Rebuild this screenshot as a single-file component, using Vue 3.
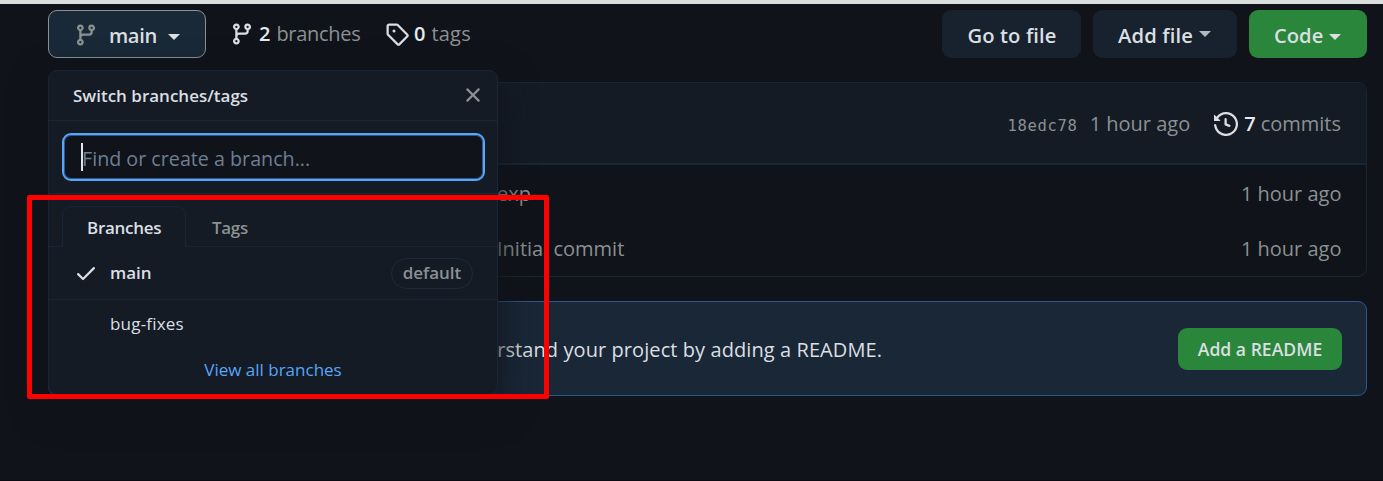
<script setup>
const icons = {
  branch: 'M11.75 2.5a.75.75 0 100 1.5.75.75 0 000-1.5zm-2.25.75a2.25 2.25 0 113 2.122V6A2.5 2.5 0 0110 8.5H6a1 1 0 00-1 1v1.128a2.251 2.251 0 11-1.5 0V5.372a2.25 2.25 0 111.5 0v1.836A2.492 2.492 0 016 7h4a1 1 0 001-1v-.628A2.25 2.25 0 019.5 3.25zM4.25 12a.75.75 0 100 1.5.75.75 0 000-1.5zM3.5 3.25a.75.75 0 111.5 0 .75.75 0 01-1.5 0z',
  tag: 'M2.5 7.775V2.75a.25.25 0 01.25-.25h5.025a.25.25 0 01.177.073l6.25 6.25a.25.25 0 010 .354l-5.025 5.025a.25.25 0 01-.354 0l-6.25-6.25a.25.25 0 01-.073-.177zm-1.5 0V2.75C1 1.784 1.784 1 2.75 1h5.025c.464 0 .91.184 1.238.513l6.25 6.25a1.75 1.75 0 010 2.474l-5.026 5.026a1.75 1.75 0 01-2.474 0l-6.25-6.25A1.75 1.75 0 011 7.775zM6 5a1 1 0 100 2 1 1 0 000-2z',
  history: 'M1.643 3.143L.427 1.927A.25.25 0 000 2.104V5.75c0 .138.112.25.25.25h3.646a.25.25 0 00.177-.427L2.715 4.215a6.5 6.5 0 11-1.18 4.458.75.75 0 10-1.493.154 8.001 8.001 0 101.6-5.684zM7.75 4a.75.75 0 01.75.75v2.992l2.028.812a.75.75 0 01-.557 1.392l-2.5-1A.75.75 0 017 8.25v-3.5A.75.75 0 017.75 4z',
  check: 'M13.78 4.22a.75.75 0 010 1.06l-7.25 7.25a.75.75 0 01-1.06 0L2.22 9.28a.75.75 0 011.06-1.06L6 10.94l6.72-6.72a.75.75 0 011.06 0z',
  close: 'M3.72 3.72a.75.75 0 011.06 0L8 6.94l3.22-3.22a.75.75 0 111.06 1.06L9.06 8l3.22 3.22a.75.75 0 11-1.06 1.06L8 9.06l-3.22 3.22a.75.75 0 01-1.06-1.06L6.94 8 3.72 4.78a.75.75 0 010-1.06z',
}
const files = [
  { message: 'exp', age: '1 hour ago' },
  { message: 'Initial commit', age: '1 hour ago' },
]
</script>

<template>
  <div class="page">
    <div class="strip"></div>

    <div class="toolbar">
      <button class="btn btn-branch">
        <svg class="icon muted" viewBox="0 0 16 16"><path :d="icons.branch" /></svg>
        <span class="branch-name">main</span>
        <i class="caret"></i>
      </button>
      <a class="stat stat-branches">
        <svg class="icon" viewBox="0 0 16 16"><path :d="icons.branch" /></svg>
        <b>2</b><span>branches</span>
      </a>
      <a class="stat stat-tags">
        <svg class="icon" viewBox="0 0 16 16"><path :d="icons.tag" /></svg>
        <b>0</b><span>tags</span>
      </a>
      <div class="actions">
        <button class="btn btn-goto"><span>Go to file</span></button>
        <button class="btn btn-add"><span>Add file</span><i class="caret"></i></button>
        <button class="btn btn-code"><span>Code</span><i class="caret"></i></button>
      </div>
    </div>

    <section class="files">
      <header class="files-head">
        <span class="sha">18edc78</span>
        <span class="when">1 hour ago</span>
        <svg class="icon" viewBox="0 0 16 16"><path :d="icons.history" /></svg>
        <b>7</b><span class="commits">commits</span>
      </header>
      <div v-for="f in files" :key="f.message" class="file-row">
        <span class="message">{{ f.message }}</span>
        <span class="when">{{ f.age }}</span>
      </div>
    </section>

    <section class="readme">
      <p>understand your project by adding a README.</p>
      <button class="btn-readme">Add a README</button>
    </section>

    <div class="menu">
      <header class="menu-head">
        <span>Switch branches/tags</span>
        <svg class="icon muted" viewBox="0 0 16 16"><path :d="icons.close" /></svg>
      </header>
      <div class="filter">
        <div class="field"><i class="cursor"></i><span>Find or create a branch...</span></div>
      </div>
      <nav class="tabs">
        <span class="tab active">Branches</span>
        <span class="tab">Tags</span>
      </nav>
      <div class="item current">
        <svg class="icon" viewBox="0 0 16 16"><path :d="icons.check" /></svg>
        <span class="item-name">main</span>
        <span class="badge">default</span>
      </div>
      <div class="item"><span class="item-name second">bug-fixes</span></div>
      <a class="all">View all branches</a>
    </div>

    <div class="highlight"></div>
  </div>
</template>

<style>
body {
  margin: 0;
  background: #10131a;
}
</style>

<style scoped>
.page {
  position: relative;
  box-sizing: border-box;
  width: 1383px;
  height: 481px;
  overflow: hidden;
  background: #10131a;
  border-bottom: 1px solid #0b0a12;
  color: #dadfe2;
  font: 20px/30px 'Open Sans', 'Noto Sans', sans-serif;
  white-space: nowrap;
}
.page * { box-sizing: border-box; }
.strip { height: 4px; background: #dadfde; }
.icon { width: 24px; height: 24px; fill: currentColor; fill-rule: evenodd; flex: none; }
.muted { color: #8b9191; }
.caret {
  width: 0;
  height: 0;
  border: 6px solid transparent;
  border-top-color: #dadfe2;
  border-bottom: 0;
}
.toolbar {
  display: flex;
  align-items: flex-start;
  height: 78px;
  padding: 6px 16px 0 48px;
}
.btn {
  display: flex;
  align-items: center;
  height: 48px;
  border: 0;
  border-radius: 9px;
  padding: 2px 0 0;
  background: #18222f;
  color: #dadfe2;
  font: 600 20.2px/30px 'Open Sans', 'Noto Sans', sans-serif;
}
.btn-branch {
  width: 158px;
  padding: 2px 0 0 25px;
  border: 1px solid #8b9191;
  background: #1a2938;
}
.btn .caret { margin-top: 3px; }
.branch-name { width: 59px; margin-left: 11px; text-align: left; letter-spacing: -.4px; }
.stat { display: flex; align-items: center; height: 48px; color: #8b9191; }
.stat .icon { margin-top: -1px; color: #dadfe2; }
.stat-branches { width: 155px; margin-left: 24px; }
.stat-branches span { letter-spacing: -.3px; }
.stat-tags span { letter-spacing: .2px; }
.stat b, .files-head b { color: #e6eaec; font-weight: 600; }
.stat b { margin-left: 5px; }
.stat span { margin-left: 6px; }
.actions { display: flex; gap: 12px; margin-left: auto; }
.btn-goto { width: 139px; padding-left: 1px; justify-content: center; letter-spacing: .1px; }
.btn-add { width: 144px; padding-left: 25px; letter-spacing: .15px; }
.btn-add .caret { margin: -3px 0 0 6px; opacity: .8; }
.btn-code { width: 118px; padding-left: 25px; background: #29863a; }
.btn-code .caret { margin-left: 6px; }
.files {
  margin: 0 16px 0 48px;
  height: 195px;
  border: 1px solid #192636;
  border-radius: 9px;
  overflow: hidden;
  color: #8b9191;
}
.files-head {
  display: flex;
  align-items: center;
  justify-content: flex-end;
  height: 82px;
  padding: 2px 25px 0 0;
  border-bottom: 2px solid #192636;
  background: #141b25;
}
.sha { margin: 4px 12px 0 0; font: 15.5px/30px 'DejaVu Sans Mono', monospace; letter-spacing: .7px; }
.files-head .icon { margin: 0 6px 0 24px; color: #dadfe2; }
.commits { margin-left: 5px; }
.file-row {
  display: flex;
  justify-content: space-between;
  height: 55px;
  padding: 14px 24.5px 0 448px;
}
.readme {
  display: flex;
  align-items: center;
  justify-content: space-between;
  height: 95px;
  margin: 24px 16px 0 48px;
  padding: 0 24px 0 0;
  border: 1px solid #2f558a;
  border-radius: 9px;
  background: #1a2737;
}
.readme p { width: 833px; margin: 3px 0 0; text-align: right; letter-spacing: .08px; }
.btn-readme {
  width: 164px;
  height: 42px;
  padding: 1px 0 0;
  border: 0;
  border-radius: 9px;
  background: #29863a;
  color: #dadfe2;
  font: 600 17.6px/41px 'Open Sans', 'Noto Sans', sans-serif;
}
/* Dropdown floating above the repository content */
.menu {
  position: absolute;
  left: 48px;
  top: 70px;
  width: 450px;
  height: 325px;
  border: 1px solid #192636;
  border-radius: 9px;
  background: #141b25;
  box-shadow: 0 12px 36px #10131a;
  font-size: 17px;
  line-height: 26px;
}
.menu-head {
  display: flex;
  align-items: center;
  justify-content: space-between;
  height: 50px;
  padding: 0 12px 0 24px;
  border-bottom: 1px solid #192636;
  font-weight: 600;
}
.menu-head .icon { margin-top: -1px; }
.filter { height: 73px; padding: 12px 12px 0 13px; border-bottom: 1px solid #192636; }
.field {
  display: flex;
  align-items: center;
  height: 48px;
  padding-left: 17px;
  border: 2px solid #58a6f8;
  border-radius: 9px;
  background: #10131a;
  box-shadow: inset 0 0 0 1px #2f558a;
  color: #6d7f93;
  font-size: 19.7px;
}
.field span { margin-top: 4px; }
.cursor { width: 2px; height: 28px; margin-right: -1px; background: #e2e5e6; }
.tabs {
  display: flex;
  align-items: flex-end;
  height: 53px;
  padding-left: 13px;
  border-bottom: 1px solid #192636;
}
.tab { height: 41px; padding: 10px 0 0 26px; color: #8b9191; font-weight: 600; letter-spacing: -.3px; }
.tab.active {
  width: 124px;
  margin-bottom: -1px;
  padding: 8px 0 0 24px;
  border: 1px solid #192636;
  border-bottom-color: #141b25;
  border-radius: 9px 9px 0 0;
  background: #141b25;
  color: #dadfe2;
}
.item { display: flex; align-items: center; height: 50px; padding: 0 24px 2px 25px; }
.current { height: 53px; padding-bottom: 0; border-bottom: 1px solid #192636; font-weight: 600; }
.item-name { margin-left: 12px; }
.second { margin-left: 36px; letter-spacing: .2px; }
.badge {
  width: 82px;
  height: 31px;
  margin-left: auto;
  border: 1px solid #1b2a3c;
  border-radius: 16px;
  color: #8b9191;
  line-height: 28px;
  text-align: center;
}
.all { display: block; height: 42px; color: #58a6f8; line-height: 40px; text-align: center; }
/* Annotation frame */
.highlight {
  position: absolute;
  left: 27px;
  top: 195px;
  width: 522px;
  height: 204px;
  border: 5px solid #f00;
  border-radius: 2px;
}
</style>
